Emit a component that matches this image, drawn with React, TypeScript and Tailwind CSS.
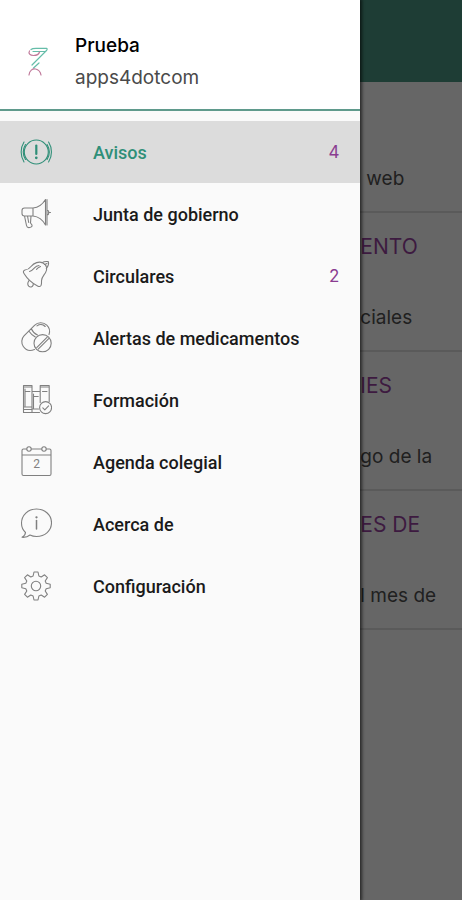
import type { ReactNode } from "react";
import { clsx } from "clsx";

type MenuItem = {
  label: string;
  icon: ReactNode;
  count?: number;
};

type Notice = {
  title?: string;
  text: string;
};

function Icon({ children }: { children: ReactNode }) {
  return (
    <svg
      viewBox="0 0 32 32"
      className="size-8 shrink-0"
      fill="none"
      stroke="currentColor"
      strokeWidth="1.1"
      strokeLinecap="round"
      strokeLinejoin="round"
      aria-hidden="true"
    >
      {children}
    </svg>
  );
}

const menu: MenuItem[] = [
  {
    label: "Avisos",
    count: 4,
    icon: (
      <Icon>
        <circle cx="16.3" cy="16" r="12" />
        <path d="M4 6C.2 12 .2 20 4 26M28.600 6c3.800 6 3.800 14 0 20M5.500 8.500c-2.700 4.500-2.700 10.500 0 15M27.100 8.500c2.700 4.500 2.700 10.500 0 15" />
        <path d="M16.300 9.500v8.500" strokeWidth="2.200" />
        <circle cx="16.300" cy="21.800" r=".8" fill="currentColor" />
      </Icon>
    ),
  },
  {
    label: "Junta de gobierno",
    icon: (
      <Icon>
        <path d="M13 10H4.500C2.800 10 2 11 2 12.500v3C2 17 2.800 18 4.500 18H13zM13 10c5-.5 9.500-3.500 12.500-8.500v25.500C22.500 21.500 18 18.500 13 18M27 1.500v25.500M27 12c2.500.5 2.500 4.500 0 5M28.500 14.500h2M4.500 18l2 9.500c.4 1.800 1.600 2.300 3.200 2 1.800-.3 2.600-1 2.300-2.500l-1.500-2 .5-7M7.500 18l1.200 6.500" />
      </Icon>
    ),
  },
  {
    label: "Circulares",
    count: 2,
    icon: (
      <Icon>
        <path d="M4 13.500c-1-1.200-.8-3 1-3.500 3.500-.3 4.500-1.500 6-3.500 3-3.700 8-5.500 12-3.500 4.200 2.300 4.500 6.500 2.500 9.700-1.800 2.800-4 4.800-4 8 0 1.800.3 3.300-.5 4.800-.7 1.200-2 1.300-3 .7-5.500-2.700-11-7.700-14-12.700z" />
        <path d="M22 2.600c2-1.200 4-1.400 6.300-1 .6 1.800.1 4.400-2 6.700M24.500 4.500l2.500-1M9 20.500c-1.200 1.800-1.500 4.300-.3 5.700 1.500 1.500 3.800 1 4.500-1.200v-1.500M9.500 11.500c2.500-.5 3.500-2 5-3.700 1.200-1.300 2.800-2.100 4.500-2.300M20.500 6.500c-1.500.7-3 1.500-4 2.800" />
      </Icon>
    ),
  },
  {
    label: "Alertas de medicamentos",
    icon: (
      <Icon>
        <path d="M14.500 27.500c-4.200 1.700-8.700.7-11.200-3-2.200-3.300-2-7.800.7-10.600L14.500 3.300c3.500-3.400 8.900-3.400 12.300-.2 2.700 2.600 3.400 6 2.200 9.400M8.800 9c1 1.500 4.200 4.800 6.500 6M11.500 7c1 2.500 3.500 5 6 6M17 3.900c2.500-1.900 6-1.700 8.200.6" />
        <circle cx="22.600" cy="21.200" r="8.600" />
        <path d="M16.700 25.700 27.200 15.200M18.200 27.200 28.700 16.700" />
      </Icon>
    ),
  },
  {
    label: "Formación",
    icon: (
      <Icon>
        <path d="M3.500 1.500h8.500v27H3.500zM12 7.500h8.200M12 28.500h7.500M20.200 18.500v-17h9v16M3.500 3h8.500M20.200 3h9M5.500 7.500h4.500M22.500 7.500h4.500M3.500 23h8.500M3.500 25.500h8.500M14 12.500h4.200M13.500 10v14M12 25h6.500M5 5v17" />
        <circle cx="25.600" cy="23.600" r="6" />
        <path d="m22.800 23.800 2 2 3.800-4" />
      </Icon>
    ),
  },
  {
    label: "Agenda colegial",
    icon: (
      <Icon>
        <path d="M6.500 3H3.500C2.500 3 2 3.500 2 4.500V28c0 1 .5 1.500 1.500 1.500h26c1 0 1.500-.5 1.500-1.500V4.500c0-1-.5-1.500-1.500-1.500H26.500M11.500 3h10M2 9h29" />
        <circle cx="9" cy="3" r="2.200" />
        <circle cx="24" cy="3" r="2.200" />
        <text
          x="16.500"
          y="22"
          textAnchor="middle"
          fill="currentColor"
          stroke="none"
          className="font-['Roboto',sans-serif] text-[12px]"
        >
          2
        </text>
      </Icon>
    ),
  },
  {
    label: "Acerca de",
    icon: (
      <Icon>
        <path d="M5.500 24.500c-2.700-2.500-4-5.700-4-9.200C1.500 7 8 1 16.500 1s15 6 15 13.800-6.500 13.700-15 13.700c-2.500 0-4.800-.6-6.500-1.500-2.300 2-5 2.500-8 2.300 2-1 3.300-2.600 3.500-4.800z" />
        <path d="M16.500 12.500V21" strokeWidth="1.500" />
        <circle cx="16.500" cy="9.300" r=".6" fill="currentColor" />
      </Icon>
    ),
  },
  {
    label: "Configuración",
    icon: (
      <Icon>
        <path d="M14 2h4l.9 4 2.300 1 3.400-2.200 2.800 2.800-2.200 3.400 1 2.300 4 .9v3.600l-4 .9-1 2.300 2.200 3.400-2.800 2.800-3.400-2.200-2.300 1-.9 4h-4l-.9-4-2.300-1-3.400 2.200-2.800-2.800L6.800 21l-1-2.300-4-.9v-3.600l4-.9 1-2.300-2.200-3.400 2.800-2.800L10.800 7l2.300-1z" />
        <circle cx="16" cy="16" r="4.700" />
      </Icon>
    ),
  },
];

const notices: Notice[] = [
  { text: "web" },
  { title: "ENTO", text: "ciales" },
  { title: "IES", text: "go de la" },
  { title: "ES DE", text: "l mes de" },
];

function Logo() {
  return (
    <svg viewBox="0 0 22 32" className="h-8 w-[22px] shrink-0" fill="none" strokeLinecap="round" aria-hidden="true">
      <path d="M4 3.500C5 2.500 7 2.300 9 2.300h10.500c1 .3.700 1.500 0 2.200L5 19M6 5.500h12M12 17l-5.500 5" stroke="#65bda9" strokeWidth="1.200" />
      <path d="M2.500 5C1 7.500 3 9.500 6.500 9.500S12 8 12.500 6M2 29c.5-4.500 3.500-6.500 6.500-6 3 .6 5 3 5.500 6" stroke="#c07a9b" strokeWidth="1.200" />
    </svg>
  );
}

function Drawer() {
  return (
    <aside className="z-10 w-[78%] shrink-0 bg-[#fafafa] shadow-[1px_0_3px_1px_rgba(0,0,0,0.6)]">
      <header className="flex items-center gap-[26px] border-b-2 border-[#5f9a8c] bg-white pt-[30px] pb-[15px] pl-[27px]">
        <Logo />
        <div className="font-['Inter',sans-serif] text-[19px] leading-8">
          <p className="font-medium text-black">Prueba</p>
          <p className="text-[#4a4a4a]">apps4dotcom</p>
        </div>
      </header>
      <nav className="pt-2.5">
        {menu.map((item, i) => (
          <button
            key={item.label}
            type="button"
            className={clsx(
              "flex h-[62px] w-full items-center pr-[21px] pl-5 text-left",
              i === 0 ? "bg-[#dcdcdc] text-[#2f8f78]" : "text-[#1a1a1a]",
            )}
          >
            <span className={i === 0 ? "text-[#2f8f78]" : "text-[#808080]"}>{item.icon}</span>
            <span className="ml-[41px] flex-1 font-['Roboto',sans-serif] text-[18px] font-medium">{item.label}</span>
            {item.count && (
              <span className="pt-0.5 font-['Inter',sans-serif] text-[17px] text-[#8a3d91]">{item.count}</span>
            )}
          </button>
        ))}
      </nav>
    </aside>
  );
}

export default function App() {
  return (
    <div className="flex min-h-screen bg-[#666666]">
      <Drawer />
      <main className="min-w-0 flex-1 overflow-hidden font-['Inter',sans-serif] whitespace-nowrap">
        <div className="h-[82px] bg-[#1e3d35]" />
        {notices.map((notice) => (
          <article
            key={notice.text}
            className={clsx("border-b-2 border-[#5a5a5a] pb-[18px]", notice.title ? "pt-5" : "pt-[83px] pl-1.5")}
          >
            {notice.title && (
              <h2 className="mb-[43px] text-[21px] leading-7 text-[#3d1a40]">{notice.title}</h2>
            )}
            <p className="text-[19px] leading-7 text-[#202020]">{notice.text}</p>
          </article>
        ))}
      </main>
    </div>
  );
}
